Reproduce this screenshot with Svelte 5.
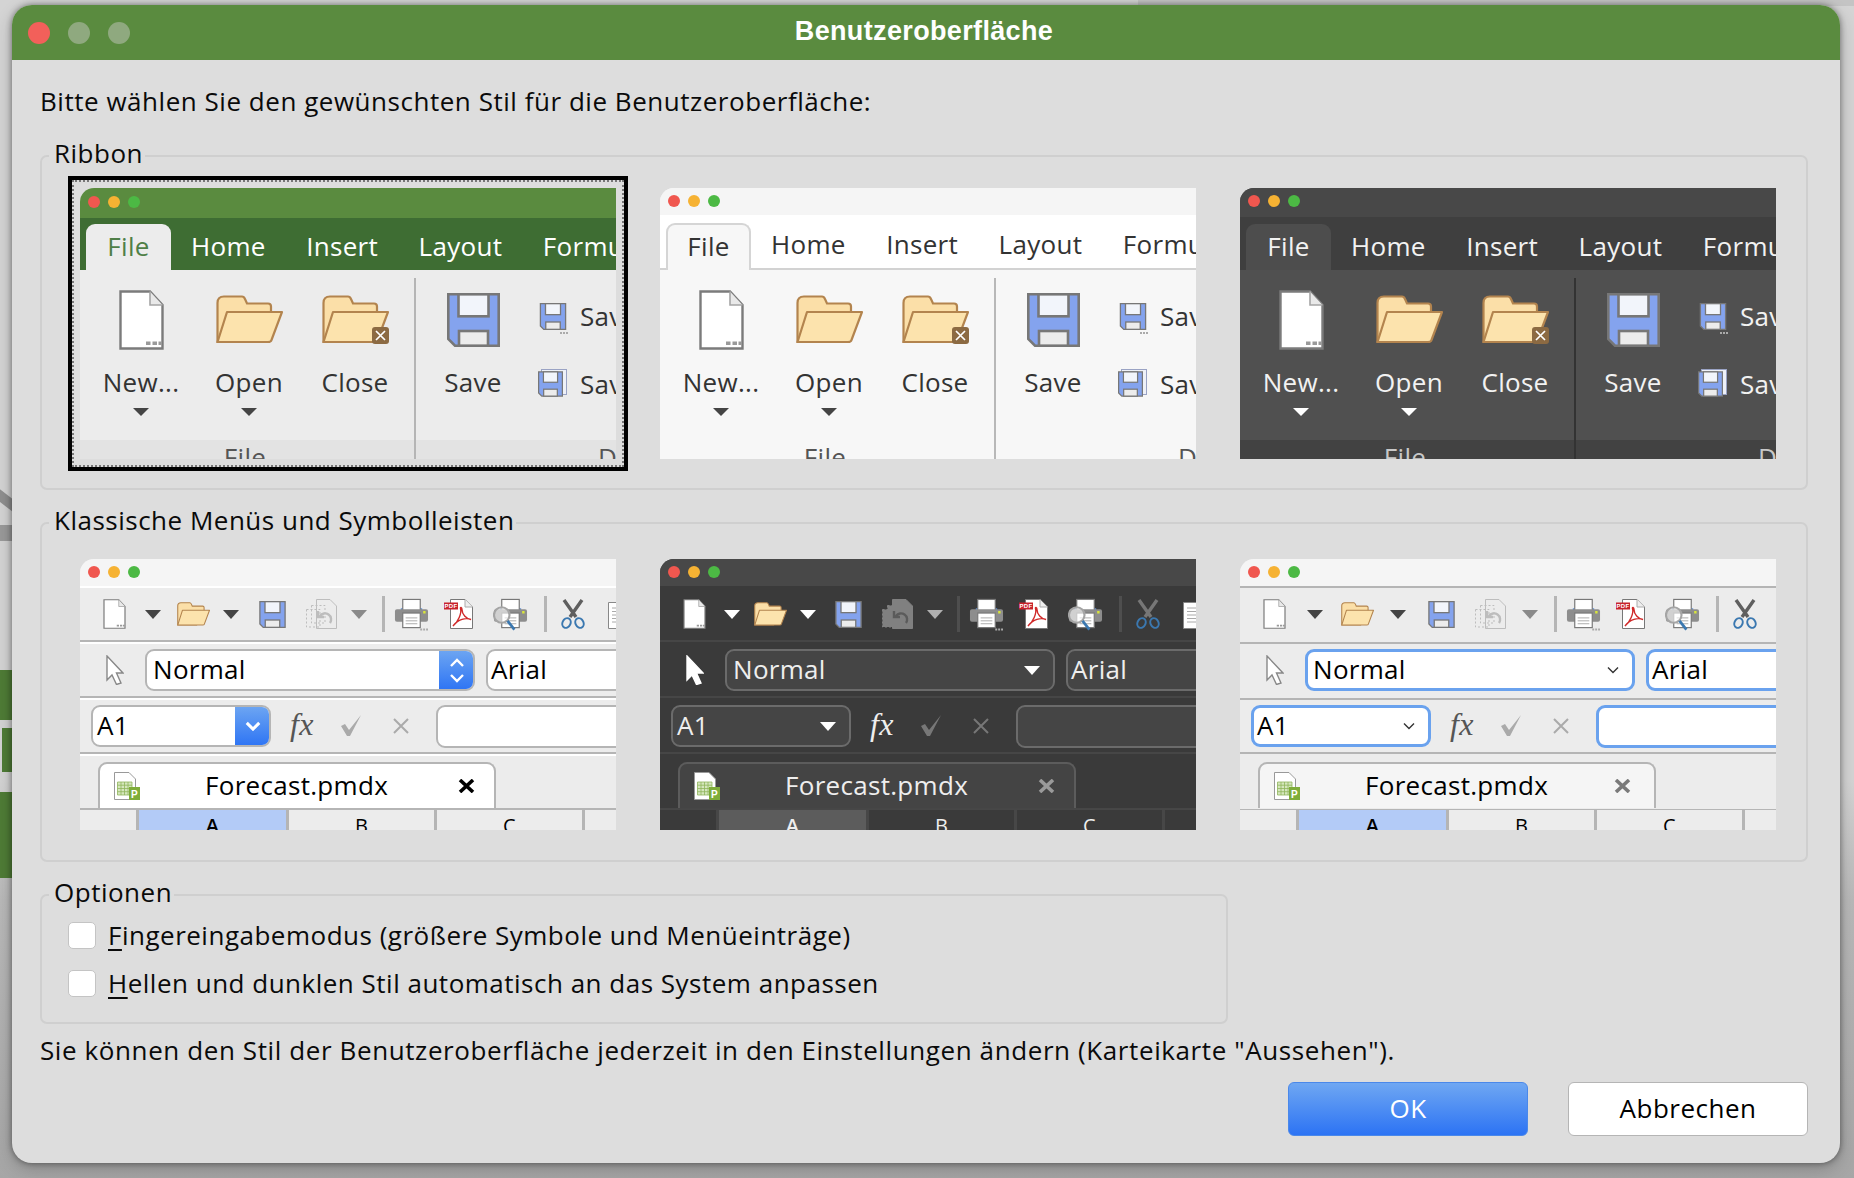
<script>
  const ribbons = ['r-green', 'r-light', 'r-dark'];
  const classics = ['c-white', 'c-dark', 'c-blue'];
  const tabs = ['Home', 'Insert', 'Layout', 'Formulas'];
</script>

{#snippet doc(cls)}
  <svg class={cls} viewBox="0 0 45 60">
    <path d="M1.500 1.500H31L43.500 15V58.500H1.500Z" fill="#fff" stroke="#7b7b7b" stroke-width="2.400" />
    <path d="M31 1.500V15H43.500" fill="#e9e9e9" stroke="#a5a5a5" stroke-width="1.600" />
    <path d="M27 51.500h4.500v3.500H27zM33.500 51.500H38v3.500h-4.500zM39.500 51.500H43v3.500h-3.500z" fill="#9a9a9a" />
  </svg>
{/snippet}

{#snippet folder(cls, closing)}
  <svg class={cls} viewBox="0 0 67 49">
    <path d="M1.500 47V8Q1.500 1.500 8 1.500H26Q28 1.500 29 4L31 8.500H52Q55 8.500 55 11.500V30L40 47Z" fill="#fbdfa8" stroke="#b3844e" stroke-width="2.200" />
    <path d="M11 17H66L55.500 45Q55 47 52 47H1.500Z" fill="#fce3ad" stroke="#b3844e" stroke-width="2.200" stroke-linejoin="round" />
    {#if closing}
      <rect x="50" y="32" width="17" height="17" rx="3" fill="#8c6a42" />
      <path d="M54 36L63 45M63 36L54 45" stroke="#fff" stroke-width="1.700" />
    {/if}
  </svg>
{/snippet}

{#snippet floppy(cls)}
  <svg class={cls} viewBox="0 0 53 54">
    <path d="M1.300 1.300H51.700V52.700H8L1.300 46Z" fill="#84a3ee" stroke="#777" stroke-width="2.600" />
    <rect x="11.500" y="1.300" width="30" height="22" fill="#f2f5fb" stroke="#777" stroke-width="2.600" />
    <rect x="12" y="38" width="29" height="14.700" fill="#ececec" stroke="#777" stroke-width="2.600" />
  </svg>
{/snippet}

{#snippet dots()}
  <svg class="i-dots" viewBox="0 0 8 2"><path d="M0 0h2v2H0zM3 0h2v2H3zM6 0h2v2H6z" fill="#aaa" /></svg>
{/snippet}

{#snippet caret(cls)}
  <span class={'caret ' + cls}></span>
{/snippet}

{#snippet printer(zoomed)}
  <svg class="i-printer" viewBox="0 0 36 33">
    <path d="M7 10h3v3H7zM26 10h3v3h-3z" fill="#5e8fd6" />
    <rect x="9" y="1" width="18" height="12" fill="#fff" stroke="#777" stroke-width="1.200" />
    <path d="M3 11H33Q35 11 35 13V22Q35 24 33 24H3Q1 24 1 22V13Q1 11 3 11Z" fill="#8d8d8d" />
    <rect x="9" y="15" width="18" height="15" fill="#fff" stroke="#777" stroke-width="1.200" />
    <path d="M12 20H24M12 23H24M12 26H24" stroke="#aaa" stroke-width="1" />
    <path d="M30 13h2.500v2.500H30z" fill="#d9e63a" />
    {#if zoomed}
      <circle cx="9" cy="17" r="8" fill="#fff" fill-opacity=".6" stroke="#a5a5a5" stroke-width="2.200" />
      <path d="M15 23L22 32" stroke="#3b78b0" stroke-width="2.800" />
    {:else}
      <path d="M27 31h2v2h-2zM30 31h2v2h-2zM33 31h2v2h-2z" fill="#aaa" />
    {/if}
  </svg>
{/snippet}

{#snippet fileTab(closeClass)}
  <div class="ctab">
    <svg class="i-sheet" viewBox="0 0 26 28">
      <path d="M.500.500H15L21.500 7V27.500H.500Z" fill="#fff" stroke="#999" />
      <path d="M3.500 10H18V23H3.500ZM3.500 13.200H18M3.500 16.500H18M3.500 19.700H18M7 10V23M10.500 10V23M14 10V23" fill="#d5e6bd" stroke="#8fb55c" stroke-width=".8" />
      <rect x="15" y="15" width="11" height="13" fill="#7fad3a" />
      <text x="20.500" y="25.500" class="sheet-p" text-anchor="middle">P</text>
    </svg>
    <span class="ctab-name">Forecast.pmdx</span>
    <svg class={'i-close ' + closeClass} viewBox="0 0 17 14"><path d="M2 1L15 13M15 1L2 13" stroke-width="3.600" /></svg>
  </div>
{/snippet}

<div class="desk">
  <div class="behind b-one"></div>
  <div class="behind b-two"></div>
  <div class="behind b-three"></div>
  <div class="behind b-four"></div>
  <div class="behind b-five"></div>
  <div class="behind b-six"></div>

  <section class="dialog">
    <header class="titlebar">
      <span class="light red"></span>
      <span class="light off"></span>
      <span class="light off"></span>
      <h1>Benutzeroberfläche</h1>
    </header>

    <div class="content">
      <p class="intro">Bitte wählen Sie den gewünschten Stil für die Benutzeroberfläche:</p>

      <div class="group g-ribbon">
        <div class="legend">Ribbon</div>
        <div class="thumbs">
          {#each ribbons as theme, i}
            <div class="thumb" class:selected={i === 0}>
              <div class={'rthumb ' + theme}>
                <div class="mini-title">
                  <i class="dot d1"></i><i class="dot d2"></i><i class="dot d3"></i>
                </div>
                <div class="rtabs">
                  <span class="rtab active">File</span>
                  {#each tabs as tab}
                    <span class="rtab">{tab}</span>
                  {/each}
                </div>
                <div class="rbody">
                  <div class="rgroup first">
                    <div class="ritems">
                      <div class="ritem w-new">
                        <div class="rico">{@render doc('i-doc')}</div>
                        <span>New...</span>
                        {@render caret('big')}
                      </div>
                      <div class="ritem w-open">
                        <div class="rico">{@render folder('i-folder', false)}</div>
                        <span>Open</span>
                        {@render caret('big')}
                      </div>
                      <div class="ritem w-close">
                        <div class="rico">{@render folder('i-folder', true)}</div>
                        <span>Close</span>
                      </div>
                    </div>
                    <div class="rlabel">File</div>
                  </div>
                  <div class="rsep"></div>
                  <div class="rgroup second">
                    <div class="ritems">
                      <div class="ritem w-save">
                        <div class="rico">{@render floppy('i-floppy')}</div>
                        <span>Save</span>
                      </div>
                      <div class="rsmall">
                        <div class="rsmall-row">
                          <div class="small-ico">
                            {@render floppy('i-floppy-s')}
                            {@render dots()}
                          </div>
                          <span>Save as</span>
                        </div>
                        <div class="rsmall-row">
                          <div class="small-ico stacked">
                            <span class="backpage"></span>
                            {@render floppy('i-floppy-s')}
                          </div>
                          <span>Save all</span>
                        </div>
                      </div>
                    </div>
                    <div class="rlabel far">Document</div>
                  </div>
                </div>
              </div>
            </div>
          {/each}
        </div>
      </div>

      <div class="group g-classic">
        <div class="legend">Klassische Menüs und Symbolleisten</div>
        <div class="thumbs">
          {#each classics as theme}
            <div class="thumb">
              <div class={'cthumb ' + theme}>
                <div class="mini-title">
                  <i class="dot d1"></i><i class="dot d2"></i><i class="dot d3"></i>
                </div>

                <div class="crow toolbar">
                  {@render doc('t-doc')}
                  {@render caret('tb c-one')}
                  {@render folder('t-folder', false)}
                  {@render caret('tb c-two')}
                  {@render floppy('t-floppy')}
                  <svg class="t-undo" viewBox="0 0 31 30">
                    <path d="M10.500.500H24L30.500 7V29.500H10.500Z" class="dim-shape" />
                    <path d="M5.500 6.500H19V24H5.500ZM.500 10.500H14V28H.500Z" class="dim-dash" />
                    <path d="M24 24A6 6 0 1 0 14 17M12 12V18H18" class="dim-arrow" />
                  </svg>
                  {@render caret('tb c-three dim')}
                  <div class="tsep"></div>
                  {@render printer(false)}
                  <svg class="t-pdf" viewBox="0 0 29 30">
                    <path d="M6.500.500H21L28.500 8V29.500H6.500Z" fill="#fff" stroke="#777" />
                    <path d="M21 .500V8H28.500" fill="#eee" stroke="#aaa" />
                    <path d="M9 27C14 23 18 14 16.500 9.500C16 8 18 8 18 10.500C18 15 22 20 27 20.500C22 18.500 14 20 9 27Z" fill="#fff" stroke="#d02a2a" stroke-width="1.400" />
                    <rect y="3.500" width="14" height="7" fill="#c8232c" />
                    <text x="7" y="9.300" class="pdf-label" text-anchor="middle">PDF</text>
                  </svg>
                  <div class="t-gap">{@render printer(true)}</div>
                  <div class="tsep after"></div>
                  <svg class="t-scissors" viewBox="0 0 24 30">
                    <path d="M3 1L15 18M21 1L9 18" class="blade" />
                    <ellipse cx="5.500" cy="24" rx="4" ry="5" transform="rotate(25 5.500 24)" class="ring" />
                    <ellipse cx="18.500" cy="24" rx="4" ry="5" transform="rotate(-25 18.500 24)" class="ring" />
                  </svg>
                  <svg class="t-page" viewBox="0 0 24 30">
                    <path d="M.500 3.500H23.500V29.500H.500Z" fill="#fff" stroke="#888" />
                    <path d="M4 9H20M4 12.500H20M4 16H20M4 19.500H20M4 23H20" stroke="#aaa" />
                  </svg>
                </div>

                <div class="crow stylebar">
                  <svg class="t-arrow" viewBox="0 0 18 30"><path d="M1 1L17 18H10.500L15 28L10.500 29.500L6 20L1 25Z" /></svg>
                  <div class="combo wide">
                    <span>Normal</span>
                    <div class="drop">
                      {#if theme === 'c-white'}
                        <svg class="updown" viewBox="0 0 16 27"><path d="M2 9L8 3L14 9M2 18L8 24L14 18" /></svg>
                      {:else if theme === 'c-dark'}
                        <i class="tri"></i>
                      {:else}
                        <svg class="chev" viewBox="0 0 12 8"><path d="M1 1.500L6 6.500L11 1.500" /></svg>
                      {/if}
                    </div>
                  </div>
                  <div class="combo font"><span>Arial</span></div>
                </div>

                <div class="crow formulabar">
                  <div class="combo cell">
                    <span>A1</span>
                    <div class="drop">
                      {#if theme === 'c-white'}
                        <svg class="chev bold" viewBox="0 0 12 8"><path d="M1 1.500L6 6.500L11 1.500" /></svg>
                      {:else if theme === 'c-dark'}
                        <i class="tri"></i>
                      {:else}
                        <svg class="chev" viewBox="0 0 12 8"><path d="M1 1.500L6 6.500L11 1.500" /></svg>
                      {/if}
                    </div>
                  </div>
                  <span class="fx">fx</span>
                  <svg class="t-check" viewBox="0 0 22 22"><path d="M1 11L5 9L9 15L21 0L10 21H7Z" /></svg>
                  <svg class="t-cross" viewBox="0 0 16 16"><path d="M1 1L15 15M15 1L1 15" /></svg>
                  <div class="entry"></div>
                </div>

                <div class="crow tabbar">
                  {@render fileTab(theme === 'c-white' ? 'solid' : 'soft')}
                </div>

                <div class="colhead">
                  <div class="col corner"></div>
                  <div class="col cur">A</div>
                  <div class="col">B</div>
                  <div class="col">C</div>
                  <div class="col"></div>
                </div>
              </div>
            </div>
          {/each}
        </div>
      </div>

      <div class="group g-options">
        <div class="legend">Optionen</div>
        <label class="check"><input type="checkbox" /><span><u>F</u>ingereingabemodus (größere Symbole und Menüeinträge)</span></label>
        <label class="check"><input type="checkbox" /><span><u>H</u>ellen und dunklen Stil automatisch an das System anpassen</span></label>
      </div>

      <p class="note">Sie können den Stil der Benutzeroberfläche jederzeit in den Einstellungen ändern (Karteikarte "Aussehen").</p>

      <div class="buttons">
        <button class="btn primary">OK</button>
        <button class="btn">Abbrechen</button>
      </div>
    </div>
  </section>
</div>

<style>
  :global(body) {
    margin: 0;
    background: #d6d6d6;
    font-family: "Open Sans", "DejaVu Sans", sans-serif;
  }

  .desk {
    position: relative;
    width: 1854px;
    height: 1178px;
    padding: 5px 0 0 12px;
    box-sizing: border-box;
    overflow: hidden;
    background: linear-gradient(#d4d4d4 0, #d4d4d4 780px, #b9b9b9 900px, #a6a6a6 1178px);
  }

  .behind {
    position: absolute;
    background: #4f7c36;
  }

  .b-one { left: 0; top: 670px; width: 14px; height: 50px; }
  .b-two { left: 2px; top: 728px; width: 12px; height: 44px; }
  .b-three { left: 0; top: 792px; width: 14px; height: 86px; }
  .b-four { left: 0; top: 525px; width: 14px; height: 16px; background: #9a9a9a; }
  .b-five { left: -6px; top: 496px; width: 26px; height: 10px; background: #8f8f8f; transform: rotate(38deg); }
  .b-six { left: 1138px; top: 0; width: 716px; height: 6px; background: #c4c4c4; }

  .dialog {
    position: relative;
    width: 1828px;
    height: 1158px;
    border-radius: 20px;
    overflow: hidden;
    background: #dddddd;
    box-shadow: 0 0 6px rgba(0, 0, 0, 0.45), 0 6px 18px rgba(0, 0, 0, 0.2);
  }

  .titlebar {
    display: flex;
    align-items: center;
    height: 55px;
    padding-left: 16px;
    gap: 18px;
    position: relative;
    background: #5a8b3f;
  }

  .titlebar h1 {
    position: absolute;
    left: 0;
    right: 4px;
    top: 11px;
    margin: 0;
    text-align: center;
    letter-spacing: 0.35px;
    font: bold 27px "Liberation Sans", sans-serif;
    color: #fff;
  }

  .light {
    width: 22px;
    height: 22px;
    border-radius: 50%;
    background: #8fa97f;
  }

  .light.red { background: #f2605a; }

  .content {
    padding: 0 32px 0 28px;
    font-size: 26px;
    letter-spacing: 0.5px;
    color: #0a0a0a;
  }

  .intro {
    margin: 26px 0 0;
    line-height: 30px;
    letter-spacing: 0.53px;
    white-space: nowrap;
  }

  .group {
    border: 2px solid #cfcfcf;
    border-radius: 7px;
  }

  .legend {
    width: fit-content;
    height: 30px;
    line-height: 28px;
    padding: 0 2px 0 5px;
    background: #dddddd;
  }

  .g-ribbon { margin-top: 39px; padding: 0 0 29px 38px; }
  .g-ribbon .legend { margin: -18px 0 19px -31px; }

  .g-classic { margin-top: 32px; padding: 0 0 30px 38px; }
  .g-classic .legend { margin: -18px 0 23px -31px; }

  .g-options { margin-top: 32px; padding: 0 0 15px 26px; box-sizing: border-box; width: 1188px; }
  .g-options .legend { margin: -18px 0 3px -19px; }

  .check {
    display: flex;
    align-items: center;
    height: 48px;
    gap: 12px;
    white-space: nowrap;
  }

  .check input {
    appearance: none;
    width: 28px;
    height: 27px;
    margin: 0;
    background: #fff;
    border: 1px solid #c4c4c4;
    border-radius: 5px;
    box-sizing: border-box;
  }

  .check u { text-underline-offset: 4px; }

  .note {
    margin: 11px 0 0;
    line-height: 30px;
    letter-spacing: 0.6px;
    white-space: nowrap;
  }

  .buttons {
    display: flex;
    justify-content: flex-end;
    gap: 40px;
    margin-top: 17px;
  }

  .btn {
    width: 240px;
    height: 54px;
    padding: 0 0 2px;
    border: 1px solid #b5b5b5;
    border-radius: 6px;
    background: #fff;
    color: #000;
    font: inherit;
    letter-spacing: inherit;
  }

  .btn.primary {
    color: #fff;
    border-color: #4a88ea;
    background: linear-gradient(#6fa7f2, #2c73f4);
  }

  .thumbs {
    display: flex;
    gap: 44px;
  }

  .thumb {
    position: relative;
    flex: none;
    width: 536px;
    height: 271px;
  }

  .thumb.selected::before {
    content: "";
    position: absolute;
    inset: -12px;
    border: 4px solid #000;
  }

  .thumb.selected::after {
    content: "";
    position: absolute;
    inset: -8px;
    border: 2px dotted #777;
  }

  .rthumb, .cthumb {
    width: 100%;
    height: 100%;
    overflow: hidden;
    border-top-left-radius: 14px;
    font-size: 26px;
    letter-spacing: 0.3px;
    white-space: nowrap;
  }

  .mini-title {
    display: flex;
    align-items: center;
    box-sizing: border-box;
    gap: 8px;
    padding-left: 8px;
    background: var(--title);
  }

  .dot {
    width: 12px;
    height: 12px;
    border-radius: 50%;
  }

  .d1 { background: #f0574f; }
  .d2 { background: #f6b233; }
  .d3 { background: #4cb944; }

  /* ribbon previews */
  .r-green { --title: #5a8b3f; --tabs: #3e6d33; --tabtext: #fff; --active: #ececec; --activetext: #4f7f47; --body: #ececec; --bar: #e3e3e3; --text: #333; --label: #555; --sep: #b5b5b5; --caret: #444; }
  .r-light { --title: #f5f5f5; --tabs: #fff; --tabtext: #333; --active: #f7f7f7; --activetext: #333; --body: #f7f7f7; --bar: #f7f7f7; --text: #333; --label: #555; --sep: #b8b8b8; --caret: #444; }
  .r-dark { --title: #484848; --tabs: #3f3f3f; --tabtext: #f2f2f2; --active: #4d4d4d; --activetext: #f2f2f2; --body: #505050; --bar: #424242; --text: #f2f2f2; --label: #c8c8c8; --sep: #333; --caret: #fff; }

  .rthumb {
    display: flex;
    flex-direction: column;
    background: var(--body);
  }

  .rthumb .mini-title { height: 30px; flex: none; padding-bottom: 3px; }
  .r-light .mini-title { height: 27px; padding-bottom: 1px; }
  .r-dark .mini-title { height: 29px; }

  .rtabs {
    flex: 1;
    flex-basis: 0;
    min-height: 52px;
    display: flex;
    align-items: flex-end;
    gap: 40.500px;
    padding-left: 6px;
    background: var(--tabs);
    color: var(--tabtext);
  }

  .r-light .rtabs { border-bottom: 2px solid #d2d2d2; }

  .rtab {
    height: 46px;
    line-height: 44px;
    flex: none;
  }

  .rtab.active {
    width: 85px;
    margin-right: -20.500px;
    text-align: center;
    border-radius: 9px 9px 0 0;
    background: var(--active);
    color: var(--activetext);
  }

  .r-light .rtab.active {
    border: 2px solid #d5d5d5;
    border-bottom: none;
    box-sizing: border-box;
    margin-bottom: -2px;
    height: 47px;
    line-height: 42px;
  }

  .rbody {
    display: flex;
    flex: none;
    height: 189px;
    background: linear-gradient(var(--body) 170px, var(--bar) 170px);
    color: var(--text);
  }

  .rgroup { flex: none; }
  .rgroup.first { width: 334px; }

  .ritems {
    display: flex;
    height: 170px;
  }

  .ritem {
    display: flex;
    flex-direction: column;
    align-items: center;
    flex: none;
    line-height: 26px;
  }

  .w-new { width: 122px; }
  .w-open { width: 94px; }
  .w-close { width: 118px; }
  .w-save { width: 114px; }

  .rico {
    height: 99px;
    display: flex;
    align-items: center;
  }

  .i-doc { width: 45px; height: 60px; }
  .i-folder { width: 67px; height: 49px; }
  .i-floppy { width: 53px; height: 54px; }
  .i-floppy-s { width: 28px; height: 27px; }

  .caret {
    width: 0;
    height: 0;
    flex: none;
    border-style: solid;
    border-color: currentColor transparent transparent;
  }

  .caret.big {
    margin-top: 13px;
    border-width: 8px 8px 0;
    color: var(--caret);
  }

  .rsep {
    flex: none;
    width: 2px;
    margin-top: 8px;
    background: var(--sep);
  }

  .rlabel {
    height: 30px;
    line-height: 34px;
    text-align: center;
    color: var(--label);
    padding-right: 4px;
    overflow: hidden;
  }

  .rlabel.far {
    text-align: left;
    padding-left: 182px;
  }

  .rsmall {
    margin: 12px 0 0 7px;
    flex: none;
  }

  .rsmall-row {
    display: flex;
    align-items: center;
    height: 68px;
  }

  .small-ico {
    position: relative;
    display: flex;
    justify-content: flex-end;
    width: 30px;
    margin-right: 13px;
  }

  .i-dots {
    position: absolute;
    right: -1px;
    bottom: -4px;
    width: 8px;
    height: 2px;
  }

  .stacked .i-floppy-s {
    position: relative;
    width: 25px;
    height: 26px;
    margin-right: 4px;
  }

  .backpage {
    position: absolute;
    right: 0;
    top: -2px;
    width: 26px;
    height: 26px;
    box-sizing: border-box;
    background: #eef1f8;
    border: 1px solid #9aa3c4;
  }

  /* classic previews */
  .c-white { --title: #f5f5f5; --bar: #ececec; --hi: #fff; --line: #b5b5b5; --text: #000; --field: #fff; --edge: #b5b5b5; --tab: #fff; --ink: #444; --dim: #8a8a8a; --sepc: #b5b5b5; --cur: #b3cbf7; --colline: #b5b5b5; --c1l: 18.600px; --c1r: 16px; --c2l: 13.600px; --c2r: 19.500px; --c3l: 14px; --c3r: 15px; --arrow: #fff; --arrowline: #888; --dimfill: none; --dimline: #bdbdbd; --fx: #555; --mute: #aaa; }
  .c-dark { --title: #484848; --bar: #3a3a3a; --hi: #3a3a3a; --line: #464646; --text: #eee; --field: #454545; --edge: #6b6b6b; --tab: #444; --ink: #fff; --dim: #b0b0b0; --sepc: #4e4e4e; --cur: #5c5c5c; --colline: #474747; --c1l: 17.800px; --c1r: 14.500px; --c2l: 12.600px; --c2r: 19px; --c3l: 14px; --c3r: 14px; --arrow: #fff; --arrowline: #fff; --dimfill: #808080; --dimline: #808080; --fx: #eee; --mute: #777; }
  .c-blue { --title: #f5f5f5; --bar: #ececec; --hi: #b5b5b5; --line: #ececec; --text: #000; --field: #fff; --edge: #6aa2ee; --tab: #f5f5f5; --ink: #444; --dim: #8a8a8a; --sepc: #b5b5b5; --cur: #b3cbf7; --colline: #b5b5b5; --c1l: 21px; --c1r: 18px; --c2l: 15.600px; --c2r: 22px; --c3l: 16px; --c3r: 16px; --arrow: #fff; --arrowline: #888; --dimfill: none; --dimline: #bdbdbd; --fx: #555; --mute: #aaa; }

  .cthumb {
    background: var(--bar);
    color: var(--text);
  }

  .cthumb .mini-title { height: 27px; padding-bottom: 1px; }

  .crow {
    display: flex;
    align-items: center;
    height: 52px;
    border-top: 2px solid var(--hi);
    border-bottom: 2px solid var(--line);
  }

  .c-blue .formulabar { border-bottom-color: #b5b5b5; }
  .c-blue .tabbar { border-top-color: #ececec; }

  .toolbar { padding-left: 23px; }

  .t-doc { width: 23px; height: 30px; flex: none; }
  .t-folder { width: 33px; height: 26px; flex: none; }
  .t-floppy { width: 27px; height: 27px; flex: none; }
  .t-undo { width: 31px; height: 30px; margin-left: 20px; flex: none; }
  .i-printer { width: 35px; height: 33px; flex: none; display: block; }
  .t-pdf { width: 29px; height: 30px; margin-left: 15px; flex: none; }
  .t-gap { margin-left: 20px; flex: none; }
  .t-scissors { width: 24px; height: 30px; margin-left: 14px; flex: none; }
  .t-page { width: 24px; height: 30px; margin-left: 23px; flex: none; }

  .dim-shape { fill: var(--dimfill); stroke: var(--dimline); }
  .dim-dash { fill: var(--dimfill); stroke: var(--dimline); stroke-dasharray: 2 2; }
  .dim-arrow { fill: none; stroke: var(--dimline); stroke-width: 2.400; }
  .c-dark .dim-arrow { stroke: #5b5b5b; }
  .blade { fill: none; stroke: #5f5f5f; stroke-width: 3.400; }
  .c-dark .blade { stroke: #777; }
  .ring { fill: none; stroke: #3b78b0; stroke-width: 2; }
  .pdf-label { font: bold 6px "Liberation Sans", sans-serif; fill: #fff; }
  .sheet-p { font: bold 10px "Liberation Sans", sans-serif; fill: #fff; }

  .caret.tb {
    border-width: 9px 8px 0;
    color: var(--ink);
  }

  .caret.c-one { margin: 0 var(--c1r) 0 var(--c1l); }
  .caret.c-two { margin: 0 var(--c2r) 0 var(--c2l); }
  .caret.c-three { margin: 0 var(--c3r) 0 var(--c3l); }
  .caret.dim { color: var(--dim); }

  .tsep {
    flex: none;
    width: 3px;
    height: 36px;
    margin-right: 9px;
    background: var(--sepc);
  }

  .tsep.after { margin: 0 0 0 16px; }

  .stylebar { padding-left: 26px; }

  .t-arrow {
    flex: none;
    width: 18px;
    height: 30px;
    margin-right: 21px;
    fill: var(--arrow);
    stroke: var(--arrowline);
    stroke-width: 1.400;
  }

  .combo {
    display: flex;
    align-items: center;
    justify-content: space-between;
    flex: none;
    height: 42px;
    box-sizing: border-box;
    overflow: hidden;
    padding-left: 6px;
    border: 2px solid var(--edge);
    border-radius: 9px;
    background: var(--field);
  }

  .combo > span { margin-bottom: 2px; }

  .c-blue .combo { border-width: 3px; padding-left: 5px; }

  .wide { width: 330px; }
  .font { width: 240px; margin-left: 11px; padding-left: 3px; }
  .cell { width: 180px; padding-left: 4px; }
  .c-blue .font, .c-blue .cell { padding-left: 3px; }

  .drop {
    align-self: stretch;
    width: 36px;
    margin: -2px -2px -2px 0;
    display: flex;
    align-items: center;
    justify-content: center;
    flex: none;
  }

  .c-white .drop { background: linear-gradient(#6fa7f2, #2c73f4); }

  .updown {
    width: 16px;
    height: 27px;
    fill: none;
    stroke: #fff;
    stroke-width: 2.400;
  }

  .chev {
    width: 12px;
    height: 8px;
    margin-right: 6px;
    fill: none;
    stroke: #333;
    stroke-width: 1.400;
  }

  .chev.bold {
    width: 16px;
    height: 10px;
    margin-right: 0;
    stroke: #fff;
    stroke-width: 2.400;
  }

  .tri {
    width: 0;
    height: 0;
    margin-right: 10px;
    border-style: solid;
    border-width: 9px 8px 0;
    border-color: #fff transparent transparent;
  }

  .formulabar { padding-left: 11px; }

  .fx {
    flex: none;
    width: 26px;
    margin: 0 0 4px 19px;
    font: italic 32px "Liberation Serif", serif;
    color: var(--fx);
  }

  .t-check { flex: none; width: 22px; height: 22px; margin-left: 24px; fill: var(--mute); }

  .t-cross {
    flex: none;
    width: 16px;
    height: 16px;
    margin-left: 31px;
    fill: none;
    stroke: var(--mute);
    stroke-width: 2;
  }

  .entry {
    flex: none;
    width: 300px;
    height: 43px;
    margin-left: 27px;
    box-sizing: border-box;
    border: 2px solid var(--edge);
    border-radius: 9px;
    background: var(--field);
  }

  .c-blue .entry { border-width: 3px; }

  .tabbar {
    align-items: flex-end;
    padding-left: 18px;
  }

  .ctab {
    display: flex;
    align-items: center;
    width: 398px;
    height: 46px;
    box-sizing: border-box;
    padding-left: 14px;
    border: 2px solid #b5b5b5;
    border-bottom: none;
    border-radius: 9px 9px 0 0;
    background: var(--tab);
  }

  .c-dark .ctab { border-color: #5c5c5c; }

  .i-sheet { flex: none; width: 26px; height: 28px; }

  .ctab-name {
    flex: none;
    width: 184px;
    margin: 0 0 2px 65px;
  }

  .i-close {
    flex: none;
    width: 17px;
    height: 14px;
    margin-left: 69px;
    fill: none;
    stroke: #000;
  }

  .i-close.soft { stroke: #7a7a7a; margin-left: 65px; }
  .c-dark .i-close.soft { stroke: #9a9a9a; margin-left: 69px; }

  .colhead {
    display: grid;
    grid-template-columns: 56px 150px 148px 148px 40px;
    height: 20px;
    margin-top: -1px;
    background: var(--bar);
    border-top: 1px solid var(--colline);
  }

  .col {
    height: 31px;
    line-height: 31px;
    text-align: center;
    font-size: 20px;
    box-sizing: border-box;
    border-left: 3px solid var(--colline);
  }

  .col.corner { border-left: none; }

  .col.cur {
    font-weight: 600;
    background: var(--cur);
  }
</style>
